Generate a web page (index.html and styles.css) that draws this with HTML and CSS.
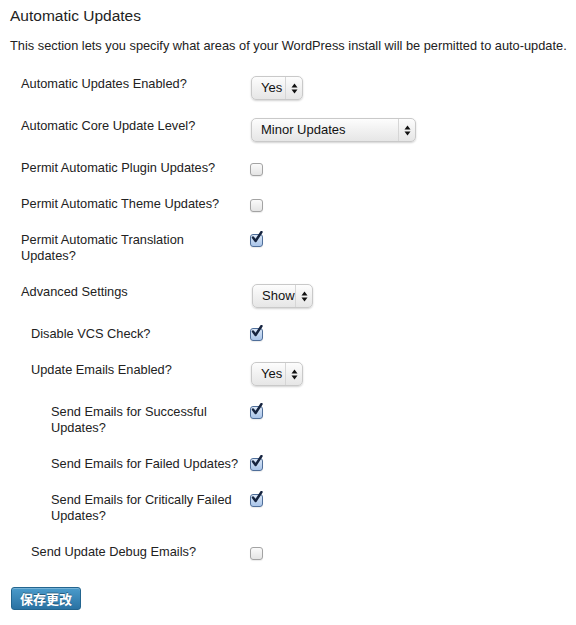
FILE: index.html
```html
<!DOCTYPE html>
<html>
<head>
<meta charset="utf-8">
<link rel="stylesheet" href="styles.css">
</head>
<body>
<div class="wrap">
  <h2 class="title">Automatic Updates</h2>
  <p class="desc">This section lets you specify what areas of your WordPress install will be permitted to auto-update.</p>

  <div class="rows">
    <div class="row row-select">
      <div class="label">Automatic Updates Enabled?</div>
      <div class="ctrl"><span class="select w-yes"><span class="sel-text">Yes</span><span class="sel-arrow"><svg width="7" height="11" viewBox="0 0 7 11"><path d="M3.5 0.5 L6.5 4.5 H0.5 Z M3.5 10.5 L6.5 6.5 H0.5 Z" fill="#111"/></svg></span></span></div>
    </div>
    <div class="row row-select">
      <div class="label">Automatic Core Update Level?</div>
      <div class="ctrl"><span class="select w-minor"><span class="sel-text">Minor Updates</span><span class="sel-arrow"><svg width="7" height="11" viewBox="0 0 7 11"><path d="M3.5 0.5 L6.5 4.5 H0.5 Z M3.5 10.5 L6.5 6.5 H0.5 Z" fill="#111"/></svg></span></span></div>
    </div>
    <div class="row">
      <div class="label">Permit Automatic Plugin Updates?</div>
      <div class="ctrl"><span class="cb"></span></div>
    </div>
    <div class="row">
      <div class="label">Permit Automatic Theme Updates?</div>
      <div class="ctrl"><span class="cb"></span></div>
    </div>
    <div class="row">
      <div class="label">Permit Automatic Translation<br>Updates?</div>
      <div class="ctrl"><span class="cb checked"><svg class="tick" width="14" height="14" viewBox="0 0 14 14"><path d="M3 6.5 L5.6 10 L11.5 1" fill="none" stroke="#16243f" stroke-width="2.4" stroke-linecap="round" stroke-linejoin="round"/></svg></span></div>
    </div>
    <div class="row row-select">
      <div class="label">Advanced Settings</div>
      <div class="ctrl"><span class="select w-show"><span class="sel-text">Show</span><span class="sel-arrow"><svg width="7" height="11" viewBox="0 0 7 11"><path d="M3.5 0.5 L6.5 4.5 H0.5 Z M3.5 10.5 L6.5 6.5 H0.5 Z" fill="#111"/></svg></span></span></div>
    </div>
    <div class="row lvl1">
      <div class="label">Disable VCS Check?</div>
      <div class="ctrl"><span class="cb checked"><svg class="tick" width="14" height="14" viewBox="0 0 14 14"><path d="M3 6.5 L5.6 10 L11.5 1" fill="none" stroke="#16243f" stroke-width="2.4" stroke-linecap="round" stroke-linejoin="round"/></svg></span></div>
    </div>
    <div class="row row-select lvl1">
      <div class="label">Update Emails Enabled?</div>
      <div class="ctrl"><span class="select w-yes"><span class="sel-text">Yes</span><span class="sel-arrow"><svg width="7" height="11" viewBox="0 0 7 11"><path d="M3.5 0.5 L6.5 4.5 H0.5 Z M3.5 10.5 L6.5 6.5 H0.5 Z" fill="#111"/></svg></span></span></div>
    </div>
    <div class="row lvl2">
      <div class="label">Send Emails for Successful Updates?</div>
      <div class="ctrl"><span class="cb checked"><svg class="tick" width="14" height="14" viewBox="0 0 14 14"><path d="M3 6.5 L5.6 10 L11.5 1" fill="none" stroke="#16243f" stroke-width="2.4" stroke-linecap="round" stroke-linejoin="round"/></svg></span></div>
    </div>
    <div class="row lvl2">
      <div class="label">Send Emails for Failed Updates?</div>
      <div class="ctrl"><span class="cb checked"><svg class="tick" width="14" height="14" viewBox="0 0 14 14"><path d="M3 6.5 L5.6 10 L11.5 1" fill="none" stroke="#16243f" stroke-width="2.4" stroke-linecap="round" stroke-linejoin="round"/></svg></span></div>
    </div>
    <div class="row lvl2">
      <div class="label">Send Emails for Critically Failed Updates?</div>
      <div class="ctrl"><span class="cb checked"><svg class="tick" width="14" height="14" viewBox="0 0 14 14"><path d="M3 6.5 L5.6 10 L11.5 1" fill="none" stroke="#16243f" stroke-width="2.4" stroke-linecap="round" stroke-linejoin="round"/></svg></span></div>
    </div>
    <div class="row lvl1">
      <div class="label">Send Update Debug Emails?</div>
      <div class="ctrl"><span class="cb"></span></div>
    </div>
  </div>

  <button class="btn">保存更改</button>
</div>
</body>
</html>
```

FILE: styles.css
```css
* { box-sizing: border-box; }
html, body { margin: 0; padding: 0; background: #fff; }
body {
  font-family: "Liberation Sans", Arial, "Noto Sans CJK SC", sans-serif;
  color: #333;
  width: 576px;
  height: 625px;
  overflow: hidden;
}
.wrap { padding: 6px 0 0 10px; }
.title {
  margin: 0;
  font-size: 15.5px;
  line-height: 20px;
  font-weight: normal;
  color: #222;
}
.desc {
  margin: 12px 0 12px 0;
  font-size: 12.8px;
  line-height: 16px;
  color: #222;
  white-space: nowrap;
}
.rows { display: flex; flex-direction: column; }
.row {
  display: grid;
  grid-template-columns: 240px auto;
  align-items: start;
  padding: 10px 0;
}
.row-select { padding-bottom: 8px; }
.label {
  padding-left: 11px;
  padding-right: 0;
  font-size: 12.8px;
  line-height: 16px;
  color: #222;
}
.lvl1 .label { padding-left: 21px; }
.lvl2 .label { padding-left: 41px; }
.ctrl { display: flex; align-items: flex-start; }

.select {
  display: inline-flex;
  align-items: stretch;
  height: 24px;
  margin-left: 1px;
  border: 1px solid #c9c9c9;
  border-radius: 5px;
  background: linear-gradient(#fdfdfd, #f1f1f1 50%, #e6e6e6);
  box-shadow: 0 1px 2px rgba(0,0,0,0.18);
  font-size: 13px;
  color: #111;
}
.sel-text {
  flex: 1;
  padding-left: 9px;
  line-height: 22px;
}
.sel-arrow {
  width: 17px;
  border-left: 1px solid #d6d6d6;
  display: flex;
  align-items: center;
  justify-content: center;
}
.w-yes { width: 52px; }
.w-minor { width: 165px; }
.w-show { width: 61px; margin-left: 2px; }

.cb {
  position: relative;
  display: inline-block;
  width: 13px;
  height: 13px;
  margin-top: 3px;
  border: 1px solid #a3a3a3;
  border-radius: 3px;
  background: linear-gradient(#fafafa, #e4e4e4);
  box-shadow: 0 1px 1px rgba(0,0,0,0.08);
}
.cb.checked {
  margin-top: 2px;
  border-color: #4f6e99;
  background: linear-gradient(#dbe8f8, #a9c4e8);
}
.tick {
  position: absolute;
  left: -1px;
  top: -4px;
}

.btn {
  display: block;
  margin: 17px 0 0 1px;
  width: 70px;
  height: 23px;
  padding: 0;
  border: 1px solid #23658f;
  border-radius: 3px;
  background: linear-gradient(#4a9bcb, #2a72a3);
  color: #fff;
  font-family: "Noto Sans CJK SC", sans-serif;
  font-size: 13px;
  font-weight: bold;
  line-height: 21px;
  text-shadow: 0 -1px 0 rgba(0,0,0,0.35);
  box-shadow: inset 0 1px 0 rgba(255,255,255,0.25);
}
```
